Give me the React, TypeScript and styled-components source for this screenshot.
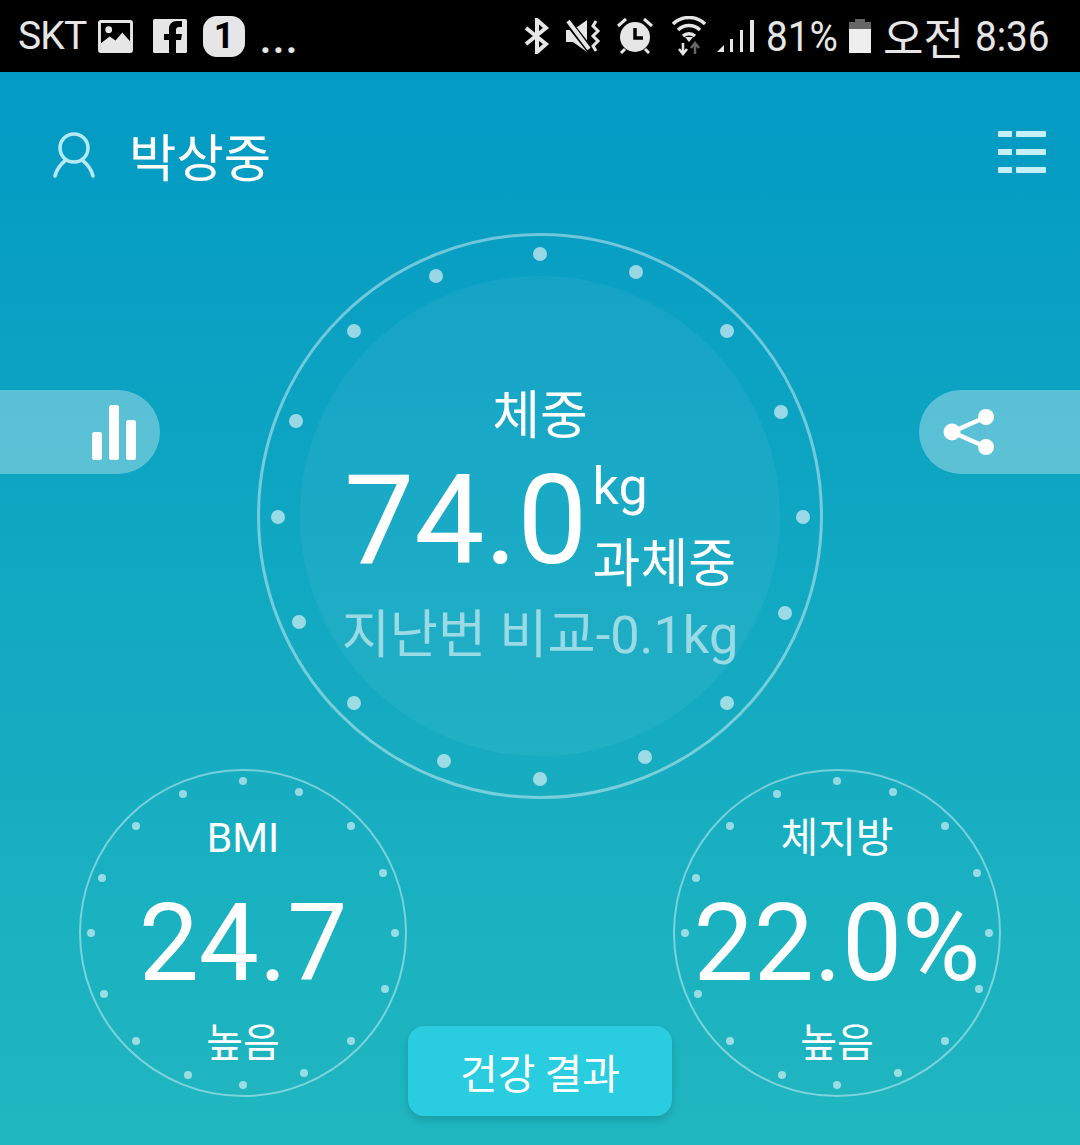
import styled, { createGlobalStyle } from 'styled-components'

const BIG_DOTS = [
  [0, -262], [96, -244], [187, -185], [241, -104], [263, 1], [245, 97], [187, 187], [105, 241],
  [0, 263], [-96, 245], [-186, 187], [-241, 106], [-262, 1], [-244, -95], [-186, -185], [-104, -240],
]

const SMALL_DOTS = [
  [0, -152], [56, -141], [108, -107], [140, -60], [152, 0], [142, 56], [108, 108], [61, 140],
  [0, 152], [-55, 142], [-107, 108], [-139, 61], [-152, 0], [-141, -55], [-107, -107], [-60, -139],
]

const GaugeCard = ({ title, value, status }: { title: string; value: string; status: string }) => (
  <SmallGauge>
    {SMALL_DOTS.map(([x, y]) => (
      <SmallDot key={`${x}_${y}`} style={{ left: `calc(50% + ${x}px)`, top: `calc(50% + ${y}px)` }} />
    ))}
    <GaugeTitle>{title}</GaugeTitle>
    <GaugeValue>{value}</GaugeValue>
    <GaugeStatus>{status}</GaugeStatus>
  </SmallGauge>
)

const App = () => {
  return (
    <Page>
      <GlobalStyle />
      <StatusBar>
        <StatusGroup>
          <Carrier>SKT</Carrier>
          <PictureIcon width="35" height="33" viewBox="0 0 36 34">
            <rect x="1.5" y="1.5" width="33" height="31" rx="1.5" fill="none" stroke="#e6e6e6" strokeWidth="3" />
            <circle cx="11" cy="10" r="3.5" fill="#e6e6e6" />
            <path d="M3 24l9-7 6 4 7-8 8 9v10H3z" fill="#e6e6e6" />
          </PictureIcon>
          <FacebookIcon width="34" height="34" viewBox="0 0 34 34">
            <rect width="34" height="34" rx="1.5" fill="#e6e6e6" />
            <path d="M23 34V21h5l1-6h-6v-4c0-2 1-3 3-3h3V2h-5c-5 0-8 3-8 8v5h-5v6h5v13z" fill="#000" />
          </FacebookIcon>
          <OneBadge>1</OneBadge>
          <MoreDots>...</MoreDots>
        </StatusGroup>
        <StatusGroup>
          <svg width="26" height="36" viewBox="0 0 26 36" fill="none" stroke="#e6e6e6" strokeWidth="4">
            <path d="M2 10l20 16-9 8V2l9 8L2 26" />
          </svg>
          <MuteIcon width="40" height="36" viewBox="0 0 40 36">
            <path d="M1 12h7L22 2v32L8 24H1z" fill="#e6e6e6" />
            <path d="M3 4l22 28" stroke="#000" strokeWidth="7" />
            <path d="M3 3l21 28" stroke="#e6e6e6" strokeWidth="4" />
            <path d="M31 3l-3 5 5 5-5 5 5 5-5 5 3 5" fill="none" stroke="#e6e6e6" strokeWidth="3" />
          </MuteIcon>
          <AlarmIcon width="38" height="38" viewBox="0 0 38 38">
            <circle cx="19" cy="20" r="15" fill="#e6e6e6" />
            <path d="M19 11v10h8" fill="none" stroke="#000" strokeWidth="3.5" />
            <path d="M2 9l8-7M36 9l-8-7M5 36l4-4M33 36l-4-4" stroke="#e6e6e6" strokeWidth="3" />
          </AlarmIcon>
          <WifiIcon width="34" height="40" viewBox="0 0 34 40" fill="none">
            <path d="M1 8a23 23 0 0 1 32 0" stroke="#e6e6e6" strokeWidth="3.5" />
            <path d="M6 14a16 16 0 0 1 22 0" stroke="#e6e6e6" strokeWidth="3.5" />
            <path d="M11 20a9 9 0 0 1 12 0" stroke="#e6e6e6" strokeWidth="3.5" />
            <path d="M17 26l-4-5h8z" fill="#e6e6e6" />
            <path d="M11 27v10M7 33l4 5 4-5" stroke="#e6e6e6" strokeWidth="2.5" />
            <path d="M23 38V28M19 32l4-5 4 5" stroke="#666" strokeWidth="2.5" />
          </WifiIcon>
          <SignalIcon width="40" height="36" viewBox="0 0 40 36" fill="#e6e6e6">
            <path d="M0 34l7-7v7z" />
            <rect x="13" y="21" width="3" height="13" />
            <rect x="23" y="12" width="3" height="22" />
            <rect x="33" y="2" width="4" height="32" />
          </SignalIcon>
          <StatusText $width={70} $gap={9}>81%</StatusText>
          <BatteryIcon width="24" height="36" viewBox="0 0 24 36">
            <rect x="7" y="1" width="10" height="4" fill="#666" />
            <rect x="1" y="4" width="22" height="7" fill="#666" />
            <rect x="1" y="11" width="22" height="24" fill="#eee" />
          </BatteryIcon>
          <StatusKorean>오전</StatusKorean>
          <StatusText $width={76} $gap={11}>8:36</StatusText>
        </StatusGroup>
      </StatusBar>

      <Header>
        <UserInfo>
          <svg width="44" height="48" viewBox="0 0 44 48" fill="none" stroke="#b5e9f3" strokeWidth="3.5" strokeLinecap="round">
            <circle cx="22" cy="17" r="14" />
            <path d="M3 45C5 37 10 32 14 29M41 45C39 37 34 32 30 29" />
          </svg>
          <UserName>박상중</UserName>
        </UserInfo>
        <MenuIcon>
          <MenuLine /><MenuLine />
          <MenuLine /><MenuLine />
          <MenuLine /><MenuLine />
        </MenuIcon>
      </Header>

      <Hero>
        <Pill $side="left">
          <svg width="46" height="56" viewBox="0 0 46 56" fill="#fff">
            <rect x="1" y="28" width="10" height="28" rx="2.5" />
            <rect x="18" y="1" width="10" height="55" rx="2.5" />
            <rect x="35" y="16" width="10" height="40" rx="2.5" />
          </svg>
        </Pill>
        <MainGauge>
          {BIG_DOTS.map(([x, y]) => (
            <BigDot key={`${x}_${y}`} style={{ left: `calc(50% + ${x}px)`, top: `calc(50% + ${y}px)` }} />
          ))}
          <InnerDisc>
            <MainTitle>체중</MainTitle>
            <ValueRow>
              <MainValue>74.0</MainValue>
              <ValueSide>
                <Unit>kg</Unit>
                <Verdict>과체중</Verdict>
              </ValueSide>
            </ValueRow>
            <Compare>지난번 비교-0.1kg</Compare>
          </InnerDisc>
        </MainGauge>
        <Pill $side="right">
          <svg width="52" height="48" viewBox="0 0 52 48" fill="#fff" stroke="#fff">
            <path d="M43 9L9 24l34 15" fill="none" strokeWidth="4.5" />
            <circle cx="43" cy="9" r="8" stroke="none" />
            <circle cx="9" cy="24" r="8.5" stroke="none" />
            <circle cx="43" cy="39" r="8" stroke="none" />
          </svg>
        </Pill>
      </Hero>

      <BottomRow>
        <GaugeCard title="BMI" value="24.7" status="높음" />
        <ResultButton>건강 결과</ResultButton>
        <GaugeCard title="체지방" value="22.0%" status="높음" />
      </BottomRow>
    </Page>
  )
}

export default App

const GlobalStyle = createGlobalStyle`
  html, body {
    margin: 0;
    padding: 0;
    background: #20b7c1;
  }
`

const Page = styled.div`
  width: 1080px;
  height: 1145px;
  overflow: hidden;
  display: flex;
  flex-direction: column;
  color: #fff;
  font-family: Roboto, 'Noto Sans CJK KR', sans-serif;
  background: linear-gradient(180deg, #000 0, #000 72px, #039ac4 72px, #20b7c0 100%);
`

const StatusBar = styled.div`
  height: 72px;
  flex: none;
  padding: 0 29px 0 18px;
  display: flex;
  align-items: center;
  justify-content: space-between;
  color: #e6e6e6;
`

const StatusGroup = styled.div`
  display: flex;
  align-items: center;
`

const Carrier = styled.span`
  font-size: 39px;
  letter-spacing: -0.8px;
  width: 70px;
  white-space: nowrap;
`

const PictureIcon = styled.svg`
  margin-left: 10px;
`

const FacebookIcon = styled.svg`
  margin-left: 20px;
`

const OneBadge = styled.span`
  width: 42px;
  height: 41px;
  margin-left: 16px;
  border-radius: 14px;
  background: #e6e6e6;
  color: #000;
  font-size: 36px;
  font-weight: 700;
  display: flex;
  align-items: center;
  justify-content: center;
`

const MoreDots = styled.span`
  margin-left: 15px;
  font-size: 38px;
  font-weight: 700;
  letter-spacing: 2px;
  line-height: 38px;
  align-self: flex-end;
`

const MuteIcon = styled.svg`
  margin-left: 15px;
`

const AlarmIcon = styled.svg`
  margin-left: 11px;
`

const WifiIcon = styled.svg`
  margin-left: 18px;
`

const SignalIcon = styled.svg`
  margin-left: 11px;
`

const BatteryIcon = styled.svg`
  margin-left: 12px;
`

const StatusText = styled.span<{ $width: number; $gap: number }>`
  width: ${(p) => p.$width}px;
  margin-left: ${(p) => p.$gap}px;
  font-size: 43px;
  line-height: 50px;
  white-space: nowrap;
  transform: scaleX(0.9);
  transform-origin: left center;
`

const StatusKorean = styled.span`
  margin-left: 11px;
  font-size: 44px;
  line-height: 50px;
  font-family: 'Noto Sans CJK KR', sans-serif;
`

const Header = styled.div`
  flex: none;
  height: 161px;
  padding: 0 34px 0 52px;
  display: flex;
  align-items: flex-start;
  justify-content: space-between;
`

const UserInfo = styled.div`
  margin-top: 59px;
  display: flex;
  align-items: center;
  gap: 33px;
`

const UserName = styled.span`
  font-size: 51.5px;
  line-height: 48px;
  font-family: 'Noto Sans CJK KR', sans-serif;
`

const MenuIcon = styled.div`
  margin-top: 59px;
  display: grid;
  grid-template-columns: 14px 30px;
  column-gap: 4px;
  row-gap: 12px;
`

const MenuLine = styled.i`
  display: block;
  height: 6px;
  border-radius: 1px;
  background: #c6f0f9;
`

const Hero = styled.div`
  flex: none;
  display: grid;
  grid-template-columns: 1fr 566px 1fr;
  align-items: start;
`

const Pill = styled.div<{ $side: 'left' | 'right' }>`
  height: 84px;
  margin-top: 157px;
  background: rgba(255, 255, 255, 0.32);
  display: flex;
  align-items: center;
  box-sizing: border-box;
  ${(p) =>
    p.$side === 'left'
      ? `width: 160px;
         justify-self: start;
         justify-content: flex-end;
         padding-right: 23px;
         border-radius: 0 42px 42px 0;`
      : `width: 161px;
         justify-self: end;
         justify-content: flex-start;
         padding-left: 24px;
         border-radius: 42px 0 0 42px;`}
`

const MainGauge = styled.div`
  position: relative;
  box-sizing: border-box;
  width: 566px;
  height: 566px;
  border: 3px solid rgba(255, 255, 255, 0.42);
  border-radius: 50%;
  display: flex;
  align-items: center;
  justify-content: center;
`

const BigDot = styled.i`
  position: absolute;
  width: 14px;
  height: 14px;
  margin: -7px 0 0 -7px;
  border-radius: 50%;
  background: rgba(255, 255, 255, 0.58);
`

const InnerDisc = styled.div`
  width: 480px;
  height: 480px;
  border-radius: 50%;
  background: rgba(255, 255, 255, 0.05);
  display: flex;
  flex-direction: column;
  align-items: center;
`

const MainTitle = styled.div`
  margin-top: 106px;
  font-size: 52px;
  line-height: 60px;
  font-family: 'Noto Sans CJK KR', sans-serif;
`

const ValueRow = styled.div`
  margin-top: 15px;
  display: flex;
  align-items: flex-start;
  gap: 5px;
  white-space: nowrap;
`

const MainValue = styled.div`
  font-size: 125px;
  line-height: 128px;
`

const ValueSide = styled.div`
  display: flex;
  flex-direction: column;
`

const Unit = styled.div`
  font-size: 52px;
  line-height: 60px;
`

const Verdict = styled.div`
  margin-top: 13px;
  font-size: 52px;
  line-height: 60px;
  font-family: 'Noto Sans CJK KR', sans-serif;
`

const Compare = styled.div`
  margin-top: 15px;
  font-size: 52.4px;
  line-height: 60px;
  color: rgba(255, 255, 255, 0.55);
  white-space: nowrap;
`

const BottomRow = styled.div`
  flex: none;
  margin-top: -30px;
  padding-left: 79px;
  display: flex;
  align-items: flex-start;
  gap: 1px;
`

const SmallGauge = styled.div`
  position: relative;
  box-sizing: border-box;
  width: 328px;
  height: 328px;
  border: 2px solid rgba(255, 255, 255, 0.42);
  border-radius: 50%;
  display: flex;
  flex-direction: column;
  align-items: center;
`

const SmallDot = styled.i`
  position: absolute;
  width: 8px;
  height: 8px;
  margin: -4px 0 0 -4px;
  border-radius: 50%;
  background: rgba(255, 255, 255, 0.55);
`

const GaugeTitle = styled.div`
  margin-top: 42px;
  font-size: 41px;
  line-height: 50px;
`

const GaugeValue = styled.div`
  margin-top: 26px;
  font-size: 107px;
  line-height: 110px;
  white-space: nowrap;
`

const GaugeStatus = styled.div`
  margin-top: 16px;
  font-size: 40px;
  line-height: 50px;
  font-family: 'Noto Sans CJK KR', sans-serif;
`

const ResultButton = styled.button`
  width: 264px;
  height: 90px;
  margin-top: 257px;
  border: none;
  border-radius: 16px;
  background: #2accdf;
  box-shadow: 0 4px 8px rgba(0, 0, 0, 0.15);
  color: #fff;
  font-size: 41px;
  font-family: 'Noto Sans CJK KR', sans-serif;
`
